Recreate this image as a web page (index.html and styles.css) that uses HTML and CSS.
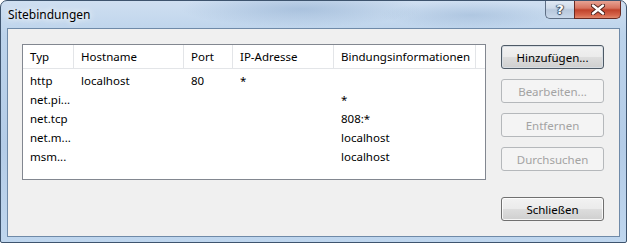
FILE: index.html
```html
<!DOCTYPE html>
<html lang="de">
<head>
    <meta charset="UTF-8">
    <title>Sitebindungen</title>
    <link rel="stylesheet" href="styles.css">
</head>
<body>
    <div class="window">
        <!-- Title bar -->
        <div class="titlebar">
            <span class="title">Sitebindungen</span>
            <div class="caption-buttons">
                <div class="cap-btn cap-help">?</div>
                <div class="cap-btn cap-close">
                    <svg width="14" height="11" viewBox="0 0 14 11">
                        <path d="M2 1.5 L12 9.5 M12 1.5 L2 9.5" stroke="#4a1f1a" stroke-width="4.2" stroke-linecap="round"/>
                        <path d="M2 1.5 L12 9.5 M12 1.5 L2 9.5" stroke="#ffffff" stroke-width="2.4" stroke-linecap="round"/>
                    </svg>
                </div>
            </div>
        </div>

        <!-- Client area -->
        <div class="client">
            <div class="list">
                <div class="list-head">
                    <div class="hcell">Typ</div>
                    <div class="hcell">Hostname</div>
                    <div class="hcell">Port</div>
                    <div class="hcell">IP-Adresse</div>
                    <div class="hcell">Bindungsinformationen</div>
                </div>
                <div class="list-body">
                    <div class="row"><span>http</span><span>localhost</span><span>80</span><span>*</span><span></span></div>
                    <div class="row"><span>net.pi...</span><span></span><span></span><span></span><span>*</span></div>
                    <div class="row"><span>net.tcp</span><span></span><span></span><span></span><span>808:*</span></div>
                    <div class="row"><span>net.m...</span><span></span><span></span><span></span><span>localhost</span></div>
                    <div class="row"><span>msm...</span><span></span><span></span><span></span><span>localhost</span></div>
                </div>
            </div>

            <div class="actions">
                <button class="btn btn-default">Hinzufügen...</button>
                <button class="btn" disabled>Bearbeiten...</button>
                <button class="btn" disabled>Entfernen</button>
                <button class="btn" disabled>Durchsuchen</button>
                <button class="btn btn-close">Schließen</button>
            </div>
        </div>
    </div>
</body>
</html>
```

FILE: styles.css
```css
:root {
    --client-bg: #f0f0f0;
    --text: #000;
    --disabled-text: #a3a3a3;
    --row-height: 19px;
}

body {
    margin: 0;
    background: #fff;
    font-family: 'Segoe UI', 'Noto Sans', 'Liberation Sans', sans-serif;
    font-size: 11.5px;
    color: var(--text);
}

.window {
    box-sizing: border-box;
    width: 627px;
    height: 243px;
    display: flex;
    flex-direction: column;
    border: 1px solid #3e546e;
    border-radius: 7px 7px 2px 2px;
    background:
        radial-gradient(ellipse 120px 18px at 300px 8px, rgba(130,162,200,0.45), transparent),
        radial-gradient(ellipse 90px 14px at 470px 14px, rgba(140,170,205,0.4), transparent),
        linear-gradient(to bottom, #cfdff1 0%, #bcd3eb 14%, #b4cce7 60%, #bfd6ee 100%);
    overflow: hidden;
}

/* Title bar */

.titlebar {
    height: 27px;
    display: flex;
    align-items: flex-start;
    padding-left: 7px;
}

.title {
    margin-top: 6px;
    line-height: 16px;
    font-size: 12px;
    text-shadow: 0 0 6px #fff, 0 0 10px rgba(255,255,255,0.8);
}

.caption-buttons {
    margin-left: auto;
    margin-right: 5px;
    margin-top: -1px;
    display: flex;
    height: 19px;
}

.cap-btn {
    box-sizing: border-box;
    height: 19px;
    display: flex;
    align-items: center;
    justify-content: center;
    border: 1px solid #5f6f85;
    border-top: none;
}

.cap-help {
    width: 29px;
    border-radius: 0 0 0 5px;
    border-right: none;
    background: linear-gradient(to bottom, #e3ebf5 0%, #cfdbe9 45%, #b8c8dc 55%, #c9d8ea 100%);
    color: #fff;
    font-family: 'DejaVu Sans', sans-serif;
    font-weight: bold;
    font-size: 13px;
    text-shadow: 0 0 1px #3b4a5e, 1px 0 1px #3b4a5e, -1px 0 1px #3b4a5e, 0 1px 1px #3b4a5e;
}

.cap-close {
    width: 47px;
    border-radius: 0 0 5px 0;
    border-color: #6a2a22;
    background: linear-gradient(to bottom, #e9a99b 0%, #d7735f 45%, #c0422b 55%, #d6664c 85%, #e08a6e 100%);
}

/* Client area */

.client {
    flex: 1;
    margin: 0 6px 5px 6px;
    border: 1px solid #6f8aa8;
    background: var(--client-bg);
    display: flex;
    gap: 15px;
    padding: 15px 15px 15px 14px;
}

.list {
    box-sizing: border-box;
    width: 464px;
    height: 136px;
    border: 1px solid #828790;
    background: #fff;
}

.list-head,
.row {
    display: grid;
    grid-template-columns: 51px 110px 49px 101px 142px;
}

.list-head {
    height: 23px;
    border-bottom: 1px solid #e3e5e8;
}

.hcell {
    padding-left: 7px;
    line-height: 23px;
    border-right: 1px solid #e3e5e8;
    white-space: nowrap;
    overflow: hidden;
}

.list-body {
    padding-top: 2px;
}

.row span {
    padding-left: 7px;
    line-height: var(--row-height);
    height: var(--row-height);
    white-space: nowrap;
}

/* Buttons */

.actions {
    width: 103px;
    display: flex;
    flex-direction: column;
    gap: 10px;
    padding-top: 1px;
}

.btn {
    box-sizing: border-box;
    height: 24px;
    width: 103px;
    padding: 0;
    font-family: inherit;
    font-size: 11.5px;
    color: var(--text);
    border: 1px solid #707070;
    border-radius: 3px;
    background: linear-gradient(to bottom, #f2f2f2 0%, #ebebeb 48%, #dddddd 52%, #cfcfcf 100%);
    box-shadow: inset 0 0 0 1px rgba(255,255,255,0.8);
}

.btn-default {
    border-color: #4e5a66;
    box-shadow: inset 0 0 0 1px #d7dde3;
}

.btn:disabled {
    color: var(--disabled-text);
    border-color: #b5b8bb;
    background: #f4f4f4;
    box-shadow: none;
}

.btn-close {
    margin-top: auto;
}
```
